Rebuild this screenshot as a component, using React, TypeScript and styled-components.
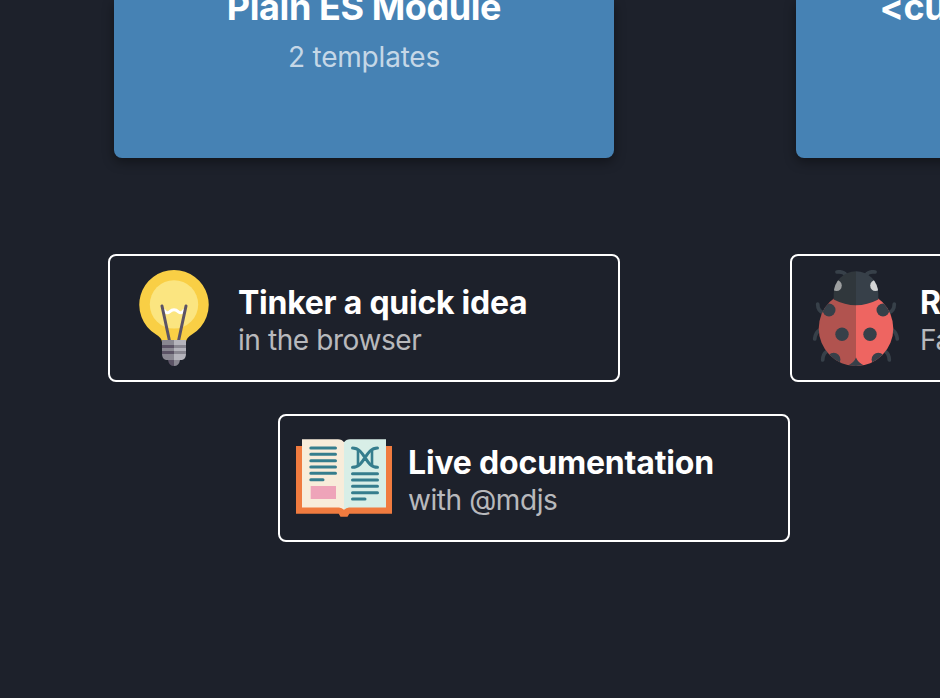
import React from "react";
import styled, { createGlobalStyle } from "styled-components";

const GlobalStyle = createGlobalStyle`
  * { box-sizing: border-box; }
  html, body { margin: 0; background: #1d212b; overflow: hidden; }
  body { font-family: Inter, "Liberation Sans", sans-serif; color: #fff; }
`;

const Page = styled.main`
  width: 940px;
  height: 698px;
  overflow: hidden;
`;

const Starters = styled.section`
  display: flex;
  gap: 182px;
  height: 254px;
  padding-left: 114px;
`;

const StarterCard = styled.article`
  flex: none;
  width: 500px;
  height: 158px;
  border-radius: 0 0 8px 8px;
  background: #4682b4;
  box-shadow: 0 4px 12px rgba(0, 0, 0, 0.4);
  text-align: center;
  white-space: nowrap;
`;

const StarterTitle = styled.h2`
  margin: -15px 0 0;
  font-size: 36px;
  font-weight: 700;
  line-height: 44px;
  letter-spacing: -0.42px;
`;

const StarterCount = styled.p`
  margin: 11px 0 0;
  font-size: 28px;
  line-height: 34px;
  letter-spacing: -0.2px;
  color: rgba(255, 255, 255, 0.7);
`;

const FeatureRow = styled.section<{ $indent: number }>`
  display: flex;
  gap: 170px;
  padding-left: ${(p) => p.$indent}px;
  margin-bottom: 32px;
`;

const FeatureCard = styled.article`
  display: flex;
  flex: none;
  align-items: center;
  gap: 16px;
  width: 512px;
  height: 128px;
  padding: 0 16px;
  border: 2px solid #fff;
  border-radius: 8px;
  white-space: nowrap;
`;

const Icon = styled.svg`
  flex: none;
  width: 96px;
  height: 96px;
`;

const FeatureTitle = styled.h3<{ $tracking: number }>`
  margin: 5px 0 0;
  font-size: 32px;
  font-weight: 700;
  line-height: 38px;
  letter-spacing: ${(p) => p.$tracking}px;
`;

const FeatureNote = styled.p<{ $tracking: number }>`
  margin: 0;
  font-size: 28px;
  line-height: 36px;
  letter-spacing: ${(p) => p.$tracking}px;
  color: rgba(255, 255, 255, 0.7);
`;

const Bulb = () => (
  <Icon viewBox="0 0 96 96">
    <path d="M48 0a34.7 34.7 0 0 1 18.6 64Q60 68 60 72H36Q36 68 29.4 64A34.7 34.7 0 0 1 48 0Z" fill="#f9cf45" />
    <circle cx="48" cy="34.4" r="24.2" fill="#fbe580" />
    <path d="M37.500 39.500q2.800 5 6 2.300q4.500-4 9 0q3.200 2.700 6-2.300" fill="none" stroke="#fff" strokeWidth="3" />
    <path d="M36 36l7.300 34M60 36l-7.300 34" stroke="#5b5365" strokeWidth="3" strokeLinecap="round" />
    <path d="M36 70h12v20h-8q-4-1-4-6z" fill="#898791" />
    <path d="M48 70h12v14q0 5-4 6h-8z" fill="#b5b4bc" />
    <path d="M36 75h12v3H36zM36 81h12v3H36z" fill="#5b5365" />
    <path d="M48 75h12v3H48zM48 81h12v3H48z" fill="#898791" />
    <path d="M42 90h6v6q-5 0-6-6z" fill="#5b5365" />
    <path d="M48 90h6q-1 6-6 6z" fill="#898791" />
  </Icon>
);

const Ladybug = () => (
  <Icon viewBox="0 0 96 96">
    <defs>
      <clipPath id="shell"><ellipse cx="48" cy="58.500" rx="37.300" ry="37.500" /></clipPath>
      <clipPath id="head"><path d="M25.700 29.500V23.500a22.300 22.300 0 0 1 44.600 0V29.500Q48 41 25.700 29.500Z" /></clipPath>
    </defs>
    <g fill="none" stroke="#374049" strokeWidth="3.700" strokeLinecap="round">
      <path d="M29 2q6-1 9 3M67 2q-6-1-9 3" />
      <path d="M9.700 34q0 7 6 9M86.300 34q0 7-6 9M12 60q-4.500 2-5.300 9M84 60q4.500 2 5.300 9M18 82q-3 2-3.300 8M78 82q3 2 3.300 8" />
    </g>
    <g clipPath="url(#shell)">
      <path d="M10 20h38v77H10z" fill="#b1534f" />
      <path d="M48 20h38v77H48z" fill="#ee6561" />
      <g fill="#374049">
        <circle cx="21" cy="40" r="6.500" /><circle cx="75" cy="40" r="6.500" />
        <circle cx="34" cy="64.300" r="6.700" /><circle cx="62" cy="64.300" r="6.700" />
        <circle cx="25.700" cy="89.500" r="6.700" /><circle cx="70.300" cy="89.500" r="6.700" />
        <path d="M48 87.500Q46 93 39 96h18Q50 93 48 87.500Z" />
      </g>
    </g>
    <g clipPath="url(#head)">
      <path d="M25 0h23v37H25z" fill="#30373c" />
      <path d="M48 0h24v37H48z" fill="#374049" />
      <ellipse cx="28.600" cy="15.600" rx="5.200" ry="5.500" fill="#9d9fa0" />
      <ellipse cx="67.400" cy="15.600" rx="5.200" ry="5.500" fill="#d3d4d5" />
    </g>
  </Icon>
);

const Book = () => (
  <Icon viewBox="0 0 96 96">
    <path d="M0 16h96v67.700H53.300L51.500 86.700H44.500L42.700 83.700H0z" fill="#f07b3f" />
    <path d="M6 9.300h36q4 0 6 3v67.700q-2-2.500-5-2.500H6z" fill="#f8ecda" />
    <path d="M90 9.300H54q-4 0-6 3v67.700q2-2.500 5-2.500h37z" fill="#d8eee7" />
    <path d="M14.700 56H40v13H14.700z" fill="#eea4b9" />
    <g fill="none" stroke="#357d8d" strokeWidth="3" strokeLinecap="round">
      <path d="M14.800 18H39.500M14.800 24.300H39.500M14.800 30.700H39.500M14.800 37H39.500M14.800 43.300H39.500M14.800 49.700H27" />
      <path d="M56.500 43.700H81.500M56.500 50H81.500M56.500 56.300H81.500M56.500 62.700H81.500M56.500 69H69" />
      <path d="M56.500 18C69 18 69 37.300 81.500 37.300M56.500 37.300C69 37.300 69 18 81.500 18" />
      <path d="M62 20.500V35M76 20.500V35" strokeWidth="2.600" strokeLinecap="butt" />
    </g>
  </Icon>
);

type FeatureProps = {
  icon: React.ReactNode;
  title: string;
  note: string;
  titleTracking?: number;
  noteTracking?: number;
};

const Feature = ({ icon, title, note, titleTracking = -0.25, noteTracking = -0.42 }: FeatureProps) => (
  <FeatureCard>
    {icon}
    <div>
      <FeatureTitle $tracking={titleTracking}>{title}</FeatureTitle>
      <FeatureNote $tracking={noteTracking}>{note}</FeatureNote>
    </div>
  </FeatureCard>
);

export default function App() {
  return (
    <Page>
      <GlobalStyle />
      <Starters>
        <StarterCard>
          <StarterTitle>Plain ES Module</StarterTitle>
          <StarterCount>2 templates</StarterCount>
        </StarterCard>
        <StarterCard>
          <StarterTitle>&lt;custom-element&gt;</StarterTitle>
        </StarterCard>
      </Starters>
      <FeatureRow $indent={108}>
        <Feature icon={<Bulb />} title="Tinker a quick idea" note="in the browser" />
        <Feature icon={<Ladybug />} title="Reproduce a bug" note="Fast and easy" />
      </FeatureRow>
      <FeatureRow $indent={278}>
        <Feature icon={<Book />} title="Live documentation" note="with @mdjs" titleTracking={-0.18} />
      </FeatureRow>
    </Page>
  );
}
